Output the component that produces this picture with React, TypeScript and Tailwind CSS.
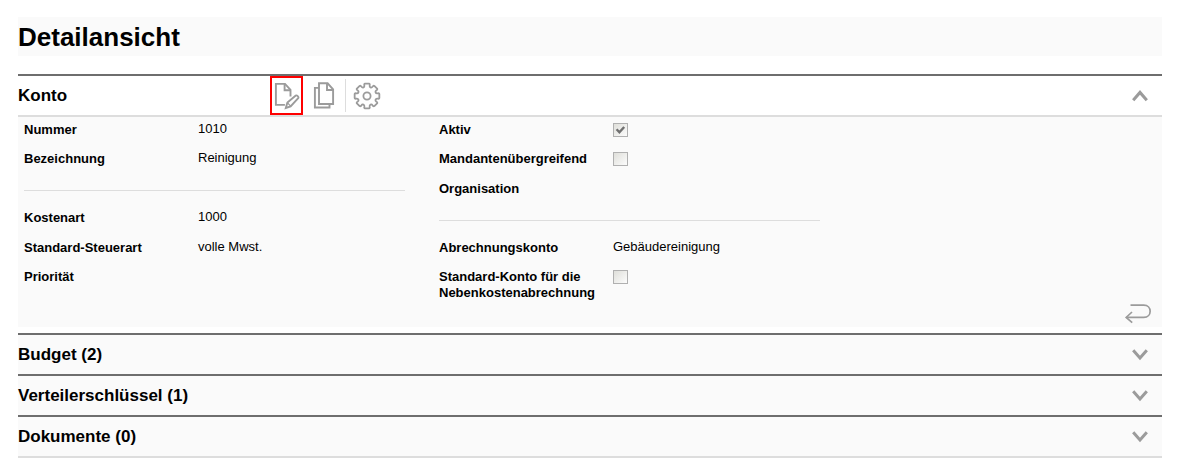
import { useState } from "react";
import type { ReactNode } from "react";

const point = (radius: number, deg: number) => {
  const rad = (deg * Math.PI) / 180;
  return `${(14 + radius * Math.cos(rad)).toFixed(2)} ${(14 + radius * Math.sin(rad)).toFixed(2)}`;
};

// Eight rounded teeth around the centre of a 28 x 28 box
const gearPath =
  [0, 45, 90, 135, 180, 225, 270, 315]
    .map(
      (a, i) =>
        `${i === 0 ? "M" : "L"}${point(11, a - 14)} Q${point(12.6, a - 14)} ${point(12.5, a - 9)} L${point(12.5, a + 9)} Q${point(12.6, a + 14)} ${point(11, a + 14)} C${point(8.8, a + 15)} ${point(8.8, a + 30)} ${point(11, a + 31)}`
    )
    .join(" ") + "Z";

const EditIcon = () => (
  <svg width="27" height="28" viewBox="0 0 27 28" fill="none" stroke="#9b9b9b" strokeWidth="1.9">
    <path d="M17.5 14.5V7.8L12 1.9H2.9V22.9h9" />
    <path d="M11.6 2v6.2h6" />
    <path d="M12.8 26l1.6-5.4 8.4-7c1-.8 3.3 1.3 2.4 2.5l-7.6 8.3z" />
    <path d="M14.4 20.6l3.2 3.6" strokeWidth="1.2" />
  </svg>
);

const CopyIcon = () => (
  <svg width="22" height="28" viewBox="0 0 22 28" fill="none" stroke="#9b9b9b" strokeWidth="1.9">
    <path d="M6 1.3h8.6l5.5 6V22H6z" />
    <path d="M14 1.6V8h6" />
    <path d="M6 5.9H1.9v19.6h14.6V22" />
  </svg>
);

const GearIcon = () => (
  <svg width="28" height="28" viewBox="0 0 28 28" fill="none" stroke="#9b9b9b" strokeWidth="1.8" strokeLinejoin="round">
    <path d={gearPath} />
    <circle cx="14" cy="14" r="3.6" />
  </svg>
);

const BackIcon = () => (
  <svg width="28" height="20" viewBox="0 0 28 20" fill="none" stroke="#9b9b9b" strokeWidth="1.7">
    <path d="M6.5 1.2h13.2c8.6 0 8.6 12.2 0 12.2H2.2" />
    <path d="M8 8L2.2 13.4l6 5.2" />
  </svg>
);

const Chevron = ({ open }: { open: boolean }) => (
  <svg width="16" height="12" viewBox="0 0 16 12" fill="none" stroke="#9b9b9b" strokeWidth="3">
    <path d={open ? "M1.2 10.2L8 2.4l6.8 7.8" : "M1.2 1.2L8 9l6.8-7.8"} />
  </svg>
);

const Field = ({ label, children }: { label: string; children?: ReactNode }) => (
  <div className="flex items-start">
    <dt className="w-[174px] shrink-0 font-bold">{label}</dt>
    <dd className="-mt-px">{children}</dd>
  </div>
);

const CheckField = ({ id, label, checked = false }: { id: string; label: string; checked?: boolean }) => (
  <div className="flex items-start">
    <label htmlFor={id} className="w-[174px] shrink-0 pr-3 font-bold">
      {label}
    </label>
    <span className="relative mt-px flex">
      <input
        id={id}
        type="checkbox"
        defaultChecked={checked}
        className="peer h-[14px] w-[15px] appearance-none border border-[#b0b0b0] bg-linear-to-br from-[#dfdfda] to-[#fcfcfc]"
      />
      <svg
        width="15"
        height="14"
        viewBox="0 0 15 14"
        fill="none"
        stroke="#707070"
        strokeWidth="2.4"
        className="pointer-events-none invisible absolute inset-0 peer-checked:visible"
      >
        <path d="M3.6 6.3L6.4 9.3L11.2 4" />
      </svg>
    </span>
  </div>
);

const Section = ({ title }: { title: string }) => {
  const [open, setOpen] = useState(false);

  return (
    <section className="border-t-2 border-[#6e6e6e] bg-[#fafafa]">
      <h2>
        <button
          type="button"
          aria-expanded={open}
          onClick={() => setOpen(!open)}
          className="flex w-full items-center justify-between py-2 pr-[14px] text-left text-[17px] leading-[23px] font-bold"
        >
          {title}
          <Chevron open={open} />
        </button>
      </h2>
    </section>
  );
};

const App = () => {
  const [open, setOpen] = useState(true);

  return (
    <main className="pt-[17px] pr-[17px] pl-[18px] font-['Liberation_Sans',Arial,sans-serif] text-black">
      <h1 className="mb-[18px] bg-[#fafafa] pt-px text-[26px] leading-[38px] font-bold">Detailansicht</h1>

      <section className="mb-1.5 border-t-2 border-[#6e6e6e]">
        {/* Header with toolbar */}
        <div className="flex items-center border-b-2 border-[#dddddd] pr-[14px]">
          <h2 className="w-[252px] text-[17px] font-bold">Konto</h2>
          <button
            type="button"
            aria-label="Bearbeiten"
            className="flex h-[39px] w-[33px] items-center justify-center border-2 border-[#fe0000]"
          >
            <EditIcon />
          </button>
          <button type="button" aria-label="Kopieren" className="mr-[10px] ml-[10px]">
            <CopyIcon />
          </button>
          <span className="h-[33px] w-px bg-[#dddddd]" />
          <button type="button" aria-label="Einstellungen" className="ml-[7px]">
            <GearIcon />
          </button>
          <button
            type="button"
            aria-label="Konto ein- oder ausklappen"
            aria-expanded={open}
            onClick={() => setOpen(!open)}
            className="ml-auto"
          >
            <Chevron open={open} />
          </button>
        </div>

        {open && (
          <div className="bg-[#fafafa] px-1.5 pt-[5px] pb-[3px] text-[13px] leading-4">
            <div className="flex gap-[34px]">
              <dl className="grid w-[381px] grid-rows-[29px_30px_29px_30px_29px_32px]">
                <Field label="Nummer">1010</Field>
                <Field label="Bezeichnung">Reinigung</Field>
                <hr className="mt-[9px] border-[#dddddd]" />
                <Field label="Kostenart">1000</Field>
                <Field label="Standard-Steuerart">volle Mwst.</Field>
                <Field label="Priorität" />
              </dl>
              <div className="grid w-[381px] grid-rows-[29px_30px_29px_30px_29px_32px]">
                <CheckField id="aktiv" label="Aktiv" checked />
                <CheckField id="mandanten" label="Mandantenübergreifend" />
                <dl>
                  <Field label="Organisation" />
                </dl>
                <hr className="mt-[10px] border-[#dddddd]" />
                <dl>
                  <Field label="Abrechnungskonto">Gebäudereinigung</Field>
                </dl>
                <CheckField id="standard" label="Standard-Konto für die Nebenkostenabrechnung" />
              </div>
            </div>
            <div className="flex justify-end pr-1">
              <button type="button" aria-label="Zurück" className="mt-[3px]">
                <BackIcon />
              </button>
            </div>
          </div>
        )}
      </section>

      <Section title="Budget (2)" />
      <Section title="Verteilerschlüssel (1)" />
      <Section title="Dokumente (0)" />
      <div className="border-t-2 border-[#dddddd]" />
    </main>
  );
};

export default App;
